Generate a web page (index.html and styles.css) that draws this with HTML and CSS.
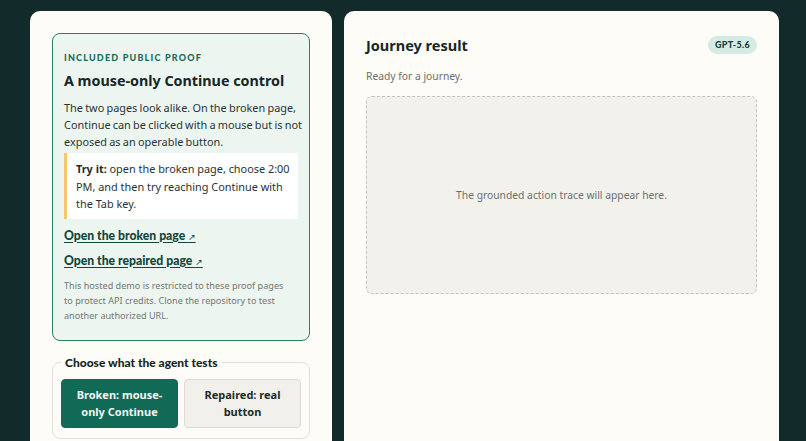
FILE: index.html
```html
<!DOCTYPE html>
<html lang="en">
<head>
<meta charset="utf-8">
<title>Journey demo</title>
<link rel="stylesheet" href="styles.css">
</head>
<body>
<main class="layout">
  <section class="card left">
    <div class="proof">
      <p class="eyebrow">Included public proof</p>
      <h2 class="proof-title">A mouse-only Continue control</h2>
      <p class="proof-text">The two pages look alike. On the broken page, Continue can be clicked with a mouse but is not exposed as an operable button.</p>
      <div class="callout"><strong>Try it:</strong> open the broken page, choose 2:00 PM, and then try reaching Continue with the Tab key.</div>
      <a class="proof-link" href="#">Open the broken page <span class="arrow">↗</span></a>
      <a class="proof-link" href="#">Open the repaired page <span class="arrow">↗</span></a>
      <p class="note">This hosted demo is restricted to these proof pages to protect API credits. Clone the repository to test another authorized URL.</p>
    </div>
    <fieldset class="choice">
      <legend>Choose what the agent tests</legend>
      <div class="choice-row">
        <button class="opt active" type="button">Broken: mouse-only Continue</button>
        <button class="opt" type="button">Repaired: real button</button>
      </div>
    </fieldset>
  </section>
  <section class="card right">
    <div class="result-head">
      <h2 class="result-title">Journey result</h2>
      <span class="badge">GPT-5.6</span>
    </div>
    <p class="status">Ready for a journey.</p>
    <div class="trace">The grounded action trace will appear here.</div>
  </section>
</main>
</body>
</html>
```

FILE: styles.css
```css
* { box-sizing: border-box; }
html, body { margin: 0; height: 100%; }
body {
  background: #132a2b;
  font-family: "Noto Sans", "Open Sans", sans-serif;
  color: #1d2b2b;
  overflow: hidden;
}
.layout {
  display: grid;
  grid-template-columns: 302px 435px;
  gap: 12px;
  padding: 11px 27px 0 30px;
  height: 100%;
}
.card {
  background: #fdfcf7;
  border-radius: 10px;
  padding: 22px;
  min-height: 460px;
}
.proof {
  background: #edf5f1;
  border: 1.5px solid #2e7d69;
  border-radius: 8px;
  padding: 17.5px 2px 17px 11px;
  display: flex;
  flex-direction: column;
}
.eyebrow {
  margin: 0;
  font-family: "Lato", sans-serif;
  font-weight: 900;
  font-size: 9px;
  letter-spacing: 1.2px;
  text-transform: uppercase;
  color: #1a6b56;
  line-height: 12px;
}
.proof-title {
  margin: 7px 0 0;
  font-size: 14.3px;
  font-weight: 700;
  line-height: 20px;
  color: #172626;
}
.proof-text {
  margin: 8.5px 0 0;
  font-size: 10.9px;
  line-height: 17px;
  word-spacing: -0.6px;
  color: #283434;
}
.callout {
  margin: 3px 9px 0 0;
  background: #ffffff;
  border-left: 3px solid #f1c96a;
  padding: 7px 2px 6px 9px;
  font-size: 10.9px;
  line-height: 17.5px;
  color: #283434;
}
.callout strong { font-weight: 700; color: #1d2b2b; }
.proof-link {
  align-self: flex-start;
  font-family: "Lato", sans-serif;
  font-weight: 900;
  font-size: 12.2px;
  color: #13463b;
  text-decoration: underline;
  text-underline-offset: 2px;
  line-height: 16px;
  margin-top: 9px;
}
.proof-link + .proof-link { margin-top: 8px; }
.arrow { font-family: "DejaVu Sans", sans-serif; font-size: 9px; font-weight: 400; }
.note {
  margin: 8px 14px 0 0;
  font-size: 9.1px;
  line-height: 15px;
  color: #747772;
}
.choice {
  margin: 14px 0 0;
  border: 1px solid #e2e0d8;
  border-radius: 8px;
  padding: 8px 8px 10px 8px;
}
.choice legend {
  font-family: "Lato", sans-serif;
  font-weight: 900;
  font-size: 12px;
  line-height: 16px;
  color: #172626;
  padding: 0 4px;
}
.choice-row {
  display: grid;
  grid-template-columns: 1fr 1fr;
  gap: 6px;
}
.opt {
  font-family: "Noto Sans", sans-serif;
  font-weight: 700;
  font-size: 11px;
  line-height: 17px;
  border-radius: 4px;
  border: 1px solid #dcdad2;
  background: #f2f0ea;
  color: #1d2b2b;
  height: 49px;
  padding: 0 14px;
}
.opt.active {
  background: #116a56;
  border-color: #116a56;
  color: #f4f6f2;
}
.result-head {
  display: flex;
  justify-content: space-between;
  align-items: center;
  margin-top: 1px;
}
.result-title {
  margin: 0;
  font-size: 14.5px;
  font-weight: 700;
  line-height: 22px;
  color: #172626;
}
.badge {
  background: #d5ece5;
  border-radius: 10px;
  padding: 3px 7px;
  font-family: "Lato", sans-serif;
  font-weight: 900;
  font-size: 9px;
  letter-spacing: 0.3px;
  color: #16413a;
  line-height: 12px;
}
.status {
  margin: 12px 0 0;
  font-size: 10.3px;
  line-height: 16px;
  color: #6d706c;
}
.trace {
  margin-top: 12px;
  height: 198px;
  background: #f3f1eb;
  border: 1px dashed #c4c3bc;
  border-radius: 6px;
  display: flex;
  align-items: center;
  justify-content: center;
  font-size: 10.3px;
  color: #6d706c;
}
```
